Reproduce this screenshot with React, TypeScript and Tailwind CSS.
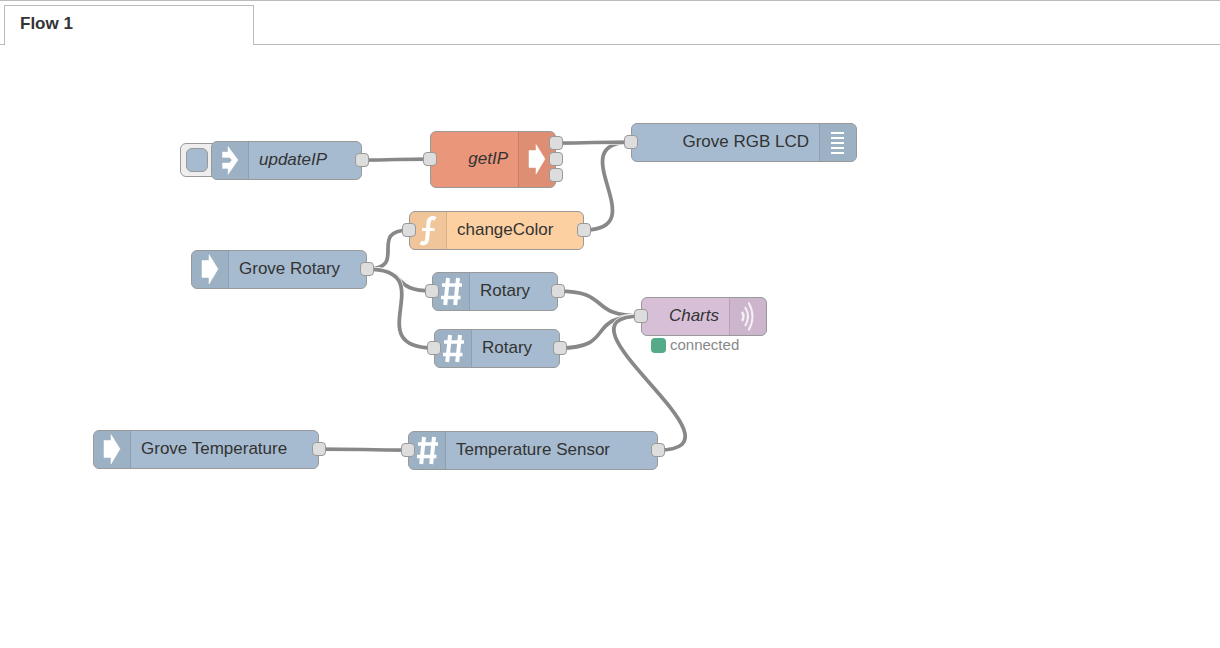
import React from "react";

type IconName = "arrow" | "inject" | "function" | "hash" | "lcd" | "waves";

interface FlowNode {
  id: string;
  label: string;
  x: number;
  y: number;
  w: number;
  h: number;
  color: string;
  icon: IconName;
  side: "left" | "right";
  italic?: boolean;
  input?: boolean;
  outputs: number;
  status?: string;
  button?: boolean;
}

const BLUE = "bg-[#a6bbcf]";

const nodes: FlowNode[] = [
  { id: "updateIP", label: "updateIP", x: 211, y: 96, w: 151, h: 39, color: BLUE, icon: "inject", side: "left", italic: true, outputs: 1, button: true },
  { id: "getIP", label: "getIP", x: 430, y: 86, w: 126, h: 57, color: "bg-[#e9967a]", icon: "arrow", side: "right", italic: true, input: true, outputs: 3 },
  { id: "lcd", label: "Grove RGB LCD", x: 631, y: 78, w: 226, h: 39, color: BLUE, icon: "lcd", side: "right", input: true, outputs: 0 },
  { id: "changeColor", label: "changeColor", x: 409, y: 166, w: 175, h: 39, color: "bg-[#fdd0a2]", icon: "function", side: "left", input: true, outputs: 1 },
  { id: "groveRotary", label: "Grove Rotary", x: 191, y: 205, w: 176, h: 39, color: BLUE, icon: "arrow", side: "left", outputs: 1 },
  { id: "rotary1", label: "Rotary", x: 432, y: 227, w: 126, h: 39, color: BLUE, icon: "hash", side: "left", input: true, outputs: 1 },
  { id: "rotary2", label: "Rotary", x: 434, y: 284, w: 126, h: 39, color: BLUE, icon: "hash", side: "left", input: true, outputs: 1 },
  { id: "charts", label: "Charts", x: 641, y: 252, w: 126, h: 39, color: "bg-[#d8bfd8]", icon: "waves", side: "right", italic: true, input: true, outputs: 0, status: "connected" },
  { id: "groveTemp", label: "Grove Temperature", x: 93, y: 385, w: 226, h: 39, color: BLUE, icon: "arrow", side: "left", outputs: 1 },
  { id: "tempSensor", label: "Temperature Sensor", x: 408, y: 386, w: 250, h: 39, color: BLUE, icon: "hash", side: "left", input: true, outputs: 1 },
];

const links: [string, string][] = [
  ["updateIP", "getIP"],
  ["changeColor", "lcd"],
  ["getIP", "lcd"],
  ["groveRotary", "changeColor"],
  ["groveRotary", "rotary1"],
  ["groveRotary", "rotary2"],
  ["rotary1", "charts"],
  ["rotary2", "charts"],
  ["tempSensor", "charts"],
  ["groveTemp", "tempSensor"],
];

const PORT_SIZE = 14;
const PORT_GAP = 16;

// Top edge of a port, relative to its node.
function portTop(h: number, index = 0, count = 1) {
  return Math.floor((h - PORT_SIZE) / 2 + (index - (count - 1) / 2) * PORT_GAP);
}

function wirePath(from: FlowNode, to: FlowNode) {
  const sx = from.x + from.w;
  const sy = from.y + portTop(from.h, 0, from.outputs) + PORT_SIZE / 2;
  const tx = to.x;
  const ty = to.y + portTop(to.h) + PORT_SIZE / 2;
  const dx = tx - sx;
  const dy = Math.abs(ty - sy);
  // Backward wires bulge out past both ports; forward ones bend with distance.
  const c = dx < 0 ? 94 - dx * 0.4 : Math.min(94, 0.48 * dx + 0.57 * dy);
  return `M${sx} ${sy}C${sx + c} ${sy} ${tx - c} ${ty} ${tx} ${ty}`;
}

function Icon({ name }: { name: IconName }) {
  return (
    <svg viewBox="0 0 36 37" className="h-[37px] w-9 shrink-0" fill="none" stroke="white" aria-hidden="true">
      {name === "arrow" && <path d="M10 9.500H17V3.500L26 18L17 33V26.500H10Z" fill="white" strokeOpacity=".5" />}
      {name === "inject" && (
        <path d="M10.500 10H16V4.500L26 18L16 32.500V26.500H10.500V21H17.500L20 18L17.500 15.500H10.500Z" fill="white" strokeOpacity=".4" />
      )}
      {name === "function" && (
        <g strokeWidth="4">
          <path d="M25.500 7C22 5 18.800 6.500 18.500 11L17.300 26C17 31 14 32.500 10.500 30.500" />
          <path d="M12 17.500H24.500" strokeWidth="3" />
        </g>
      )}
      {name === "hash" && (
        <g strokeWidth="4">
          <path d="M15 5L12.200 32M25 5L22.200 32" />
          <path d="M9 12H29M8 24.500H27.500" strokeWidth="3.500" />
        </g>
      )}
      {name === "lcd" && <path d="M11 9H24M11 14H24M11 19H24M11 24H24M11 29H24" strokeWidth="2" />}
      {name === "waves" && (
        <g strokeWidth="2" strokeOpacity=".8">
          <path d="M12 14Q15 18.500 12 23" strokeWidth="2.500" />
          <path d="M15 9Q21 18.500 15 28" />
          <path d="M18.500 4.500Q26.500 18.500 18.500 32.500" />
        </g>
      )}
    </svg>
  );
}

function Port({ side, top }: { side: "left" | "right"; top: number }) {
  return (
    <span
      className={`absolute size-3.5 rounded-[4px] border border-[#999] bg-[#ddd] ${side === "left" ? "-left-[7px]" : "-right-[7px]"}`}
      style={{ top }}
    />
  );
}

function NodeBox({ node }: { node: FlowNode }) {
  const left = node.side === "left";
  return (
    <div className="absolute" style={{ left: node.x, top: node.y, width: node.w, height: node.h }}>
      {node.button && (
        <div className="absolute top-[2px] -left-[31px] flex h-[34px] w-10 items-center rounded-[6px] border border-[#999] bg-[#eee] pl-[5px]">
          <button type="button" aria-label="Inject updateIP" className={`h-6 w-[22px] rounded-[6px] border border-[#999] ${BLUE}`} />
        </div>
      )}
      <div
        className={`relative flex h-full items-stretch overflow-hidden rounded-[6px] border border-[#999] ${node.color} ${left ? "" : "flex-row-reverse"}`}
      >
        <div className={`flex shrink-0 items-center border-black/10 bg-black/5 ${left ? "border-r" : "border-l"}`}>
          <Icon name={node.icon} />
        </div>
        <span
          className={`flex-1 self-center pb-[2px] text-[17px] leading-5 whitespace-nowrap ${left ? "pl-[10px]" : "pr-[10px] text-right"} ${node.italic ? "italic" : ""}`}
        >
          {node.label}
        </span>
      </div>
      {node.input && <Port side="left" top={portTop(node.h)} />}
      {Array.from({ length: node.outputs }, (_, i) => (
        <Port key={i} side="right" top={portTop(node.h, i, node.outputs)} />
      ))}
      {node.status && (
        <div className="absolute top-full left-[10px] flex items-center gap-1 text-[15px] leading-[18px] text-[#888]">
          <span className="size-[15px] rounded-[4px] bg-[#5a8]" />
          {node.status}
        </div>
      )}
    </div>
  );
}

export default function App() {
  const byId = Object.fromEntries(nodes.map((n) => [n.id, n]));
  return (
    <div className="flex min-h-screen flex-col border-t border-[#bbb] bg-white font-['Liberation_Sans',Arial,sans-serif] text-[#333]">
      <nav className="flex h-11 items-stretch pt-1">
        <div className="w-1 border-b border-[#bbb]" />
        <a href="#flow-1" className="w-[250px] border-x border-t border-[#bbb] px-[15px] pt-2 text-[17px] leading-5 font-bold">
          Flow 1
        </a>
        <div className="flex-1 border-b border-[#bbb]" />
      </nav>
      <main id="flow-1" className="relative min-h-[440px] flex-1">
        <svg className="absolute inset-0 size-full overflow-visible" fill="none" aria-hidden="true">
          {links.map(([a, b]) => {
            const d = wirePath(byId[a], byId[b]);
            return (
              <g key={`${a}-${b}`}>
                <path d={d} stroke="white" strokeWidth="5" />
                <path d={d} stroke="#888" strokeWidth="3.75" />
              </g>
            );
          })}
        </svg>
        {nodes.map((n) => (
          <NodeBox key={n.id} node={n} />
        ))}
      </main>
    </div>
  );
}
